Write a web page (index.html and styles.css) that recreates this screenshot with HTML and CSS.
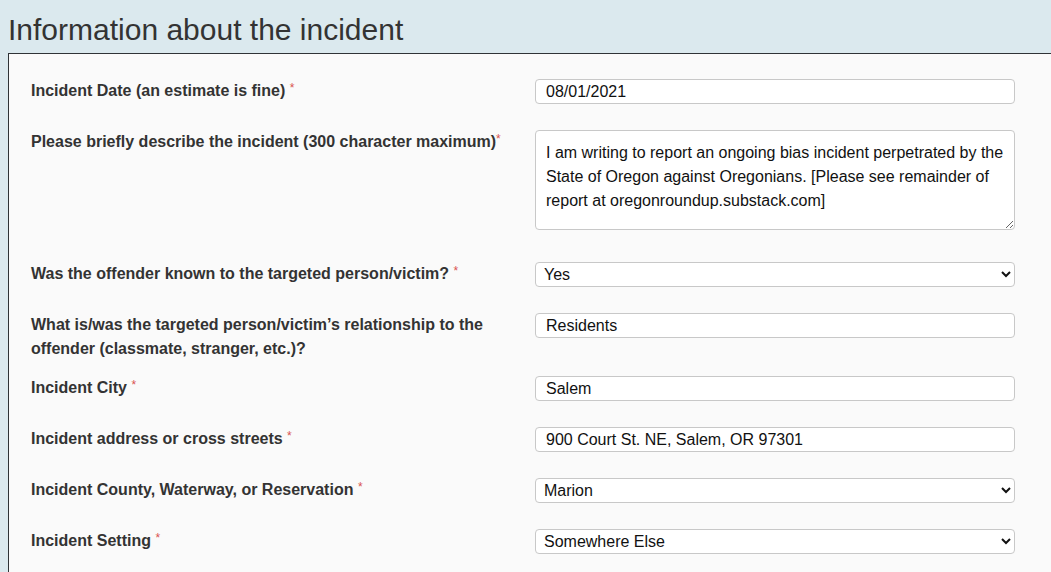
FILE: index.html
```html
<!DOCTYPE html>
<html lang="en">
<head>
<meta charset="utf-8">
<title>Information about the incident</title>
<link rel="stylesheet" href="styles.css">
</head>
<body>
<div class="page">
  <h1 class="title">Information about the incident</h1>
  <form class="panel">
    <div class="row">
      <label class="label" for="f-date">Incident Date (an estimate is fine) <span class="req">*</span></label>
      <div class="field"><input id="f-date" class="control" type="text" value="08/01/2021"></div>
    </div>
    <div class="row">
      <label class="label" for="f-desc">Please briefly describe the incident (300 character maximum)<span class="req">*</span></label>
      <div class="field"><textarea id="f-desc" class="control area">I am writing to report an ongoing bias incident perpetrated by the State of Oregon against Oregonians. [Please see remainder of report at oregonroundup.substack.com]</textarea></div>
    </div>
    <div class="row">
      <label class="label" for="f-known">Was the offender known to the targeted person/victim? <span class="req">*</span></label>
      <div class="field"><select id="f-known" class="control sel"><option>Yes</option><option>No</option></select></div>
    </div>
    <div class="row">
      <label class="label" for="f-rel">What is/was the targeted person/victim’s relationship to the offender (classmate, stranger, etc.)?</label>
      <div class="field"><input id="f-rel" class="control" type="text" value="Residents"></div>
    </div>
    <div class="row">
      <label class="label" for="f-city">Incident City <span class="req">*</span></label>
      <div class="field"><input id="f-city" class="control" type="text" value="Salem"></div>
    </div>
    <div class="row">
      <label class="label" for="f-addr">Incident address or cross streets <span class="req">*</span></label>
      <div class="field"><input id="f-addr" class="control" type="text" value="900 Court St. NE, Salem, OR 97301"></div>
    </div>
    <div class="row">
      <label class="label" for="f-county">Incident County, Waterway, or Reservation <span class="req">*</span></label>
      <div class="field"><select id="f-county" class="control sel"><option>Marion</option></select></div>
    </div>
    <div class="row">
      <label class="label" for="f-set">Incident Setting <span class="req">*</span></label>
      <div class="field"><select id="f-set" class="control sel"><option>Somewhere Else</option></select></div>
    </div>
  </form>
</div>
</body>
</html>
```
FILE: styles.css
```css
html {
  overflow: hidden;
}
body {
  margin: 0;
  background: #dbe9ee;
  font-family: "Liberation Sans", Arial, sans-serif;
  color: #333;
}
.page {
  padding: 13px 0 0 8px;
}
.title {
  margin: 0 0 6px;
  font-size: 30px;
  line-height: 34px;
  font-weight: normal;
  color: #333;
}
.panel {
  width: 1080px;
  height: 519px;
  overflow: hidden;
  box-sizing: border-box;
  background: #fafafa;
  border-top: 1px solid #2f3336;
  border-left: 1px solid #2f3336;
  padding: 25px 0 0 22px;
}
.row {
  display: flex;
  align-items: flex-start;
  margin-bottom: 15px;
}
.label {
  width: 504px;
  flex: none;
  box-sizing: border-box;
  padding-right: 15px;
  font-size: 16px;
  line-height: 24px;
  font-weight: bold;
  color: #333;
}
.req {
  color: #d9534f;
  font-size: 12px;
  vertical-align: top;
  line-height: 18px;
  font-weight: normal;
}
.field {
  width: 480px;
  flex: none;
}
.control {
  display: block;
  box-sizing: border-box;
  width: 480px;
  height: 25px;
  margin: 0 0 11px;
  padding: 0 8px 0 10px;
  border: 1px solid #c8c8c8;
  border-radius: 4px;
  background: #fff;
  font-family: "Liberation Sans", Arial, sans-serif;
  font-size: 16px;
  color: #111;
}
.sel {
  padding-left: 4px;
}
.area {
  height: 100px;
  margin-bottom: 17px;
  padding: 10px 4px 0 10px;
  line-height: 24px;
  resize: vertical;
}
```
